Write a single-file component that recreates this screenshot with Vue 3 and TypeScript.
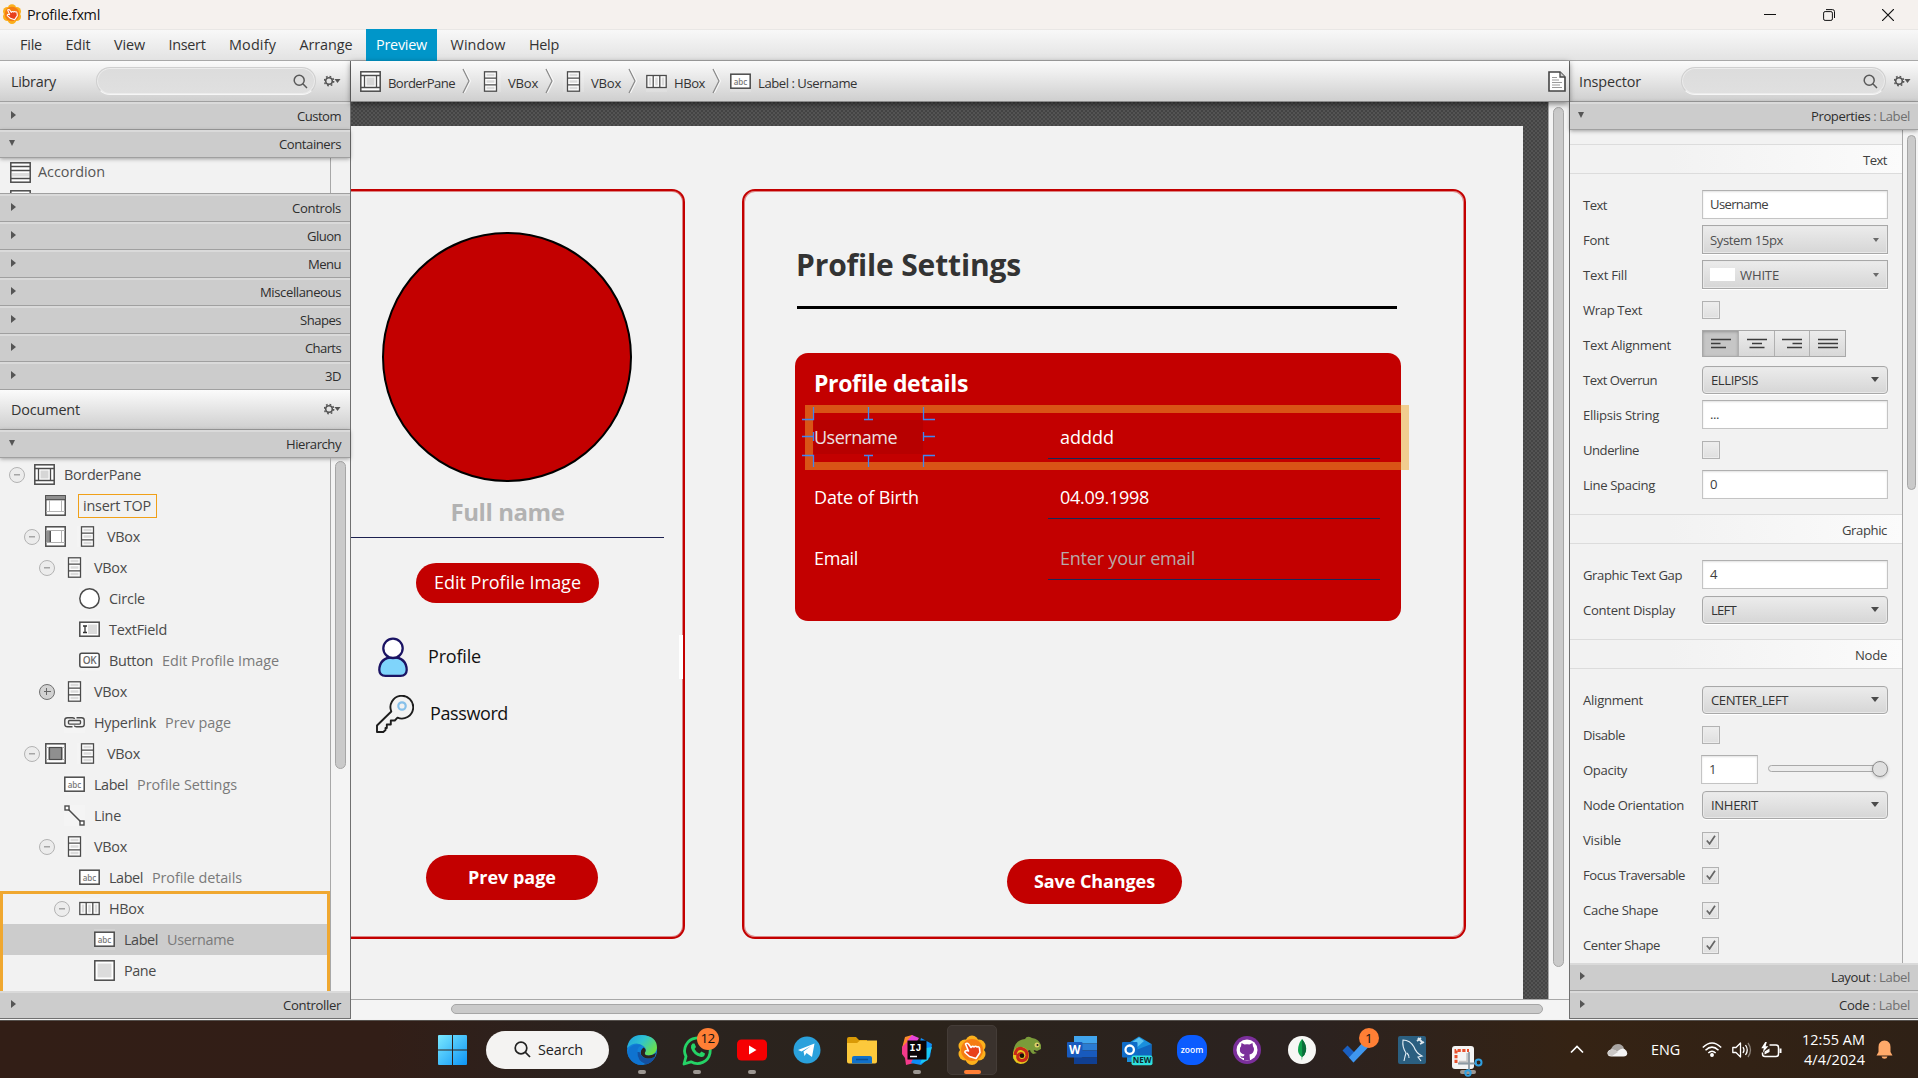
<script setup lang="ts">
import type { Directive } from 'vue'

/* Tightens or loosens tracking so that a label takes the given width. */
const vFit: Directive<HTMLElement, number | undefined> = {
  mounted(el, { value }) {
    const count = (el.textContent ?? '').trim().length
    if (!value || count < 2) return
    const natural = el.getBoundingClientRect().width
    el.style.letterSpacing = `${((value - natural) / count).toFixed(3)}px`
  },
}

const INK = '#4b4b4b'
const frame = `<rect x=".8" y=".8" width="19.4" height="19.4" fill="#fff" stroke="${INK}" stroke-width="1.5"/>`
const abc = `<rect x=".8" y="3.2" width="19.4" height="14" fill="#fff" stroke="${INK}" stroke-width="1.5"/><text x="10.5" y="13.500" font-family="Open Sans, sans-serif" font-size="8" font-weight="600" text-anchor="middle" fill="#7a7a7a">abc</text>`

const icons: Record<string, string> = {
  border: `${frame}<path d="M1 4.5H20M1 16.5H20M4.500 4.500V16.500M16.500 4.500V16.500" stroke="${INK}" stroke-width="1.3"/><rect x="6.500" y="6.500" width="8" height="8" fill="#d6d6d6"/>`,
  top: `${frame}<path d="M1 1H20V4.500H1z" fill="#8f8f8f"/><path d="M1 4.700H20" stroke="${INK}" stroke-width="1.200"/><path d="M1 16.500H20M4.500 5V16.500M16.500 5V16.500" stroke="#b5b5b5"/>`,
  left: `${frame}<path d="M1 4.500H5.300V16.500H1z" fill="#8f8f8f"/><path d="M5.300 4.500V16.500" stroke="${INK}" stroke-width="1.300"/><path d="M1 4.500H20M1 16.500H20M16.500 4.500V16.500" stroke="#b0b0b0"/>`,
  center: `${frame}<path d="M1 4.500H20M1 16.500H20M3.500 4.500V16.500M17.500 4.500V16.500" stroke="#b0b0b0"/><rect x="4.500" y="4.500" width="12" height="12" fill="#8f8f8f" stroke="${INK}" stroke-width="1.200"/>`,
  vbox: `<rect x="4.500" y=".8" width="12" height="19.400" fill="#fff" stroke="${INK}" stroke-width="1.300"/><path d="M4.500 7.200H16.500M4.500 13.800H16.500" stroke="${INK}" stroke-width="1.300"/><path d="M6.500 4H14.500M6.500 10.500H14.500M6.500 17H14.500" stroke="#dcdcdc" stroke-width="2.500"/>`,
  hbox: `<rect x=".8" y="4.500" width="19.400" height="12" fill="#fff" stroke="${INK}" stroke-width="1.300"/><path d="M7.200 4.500V16.500M13.800 4.500V16.500" stroke="${INK}" stroke-width="1.300"/><path d="M4 6.500V14.500M10.500 6.500V14.500M17 6.500V14.500" stroke="#dcdcdc" stroke-width="2.500"/>`,
  circle: `<circle cx="10.500" cy="10.500" r="9.700" fill="#fff" stroke="${INK}" stroke-width="1.500"/>`,
  field: `<rect x=".8" y="3.200" width="19.400" height="14" fill="#fff" stroke="${INK}" stroke-width="1.500"/><path d="M9 5.500H18V15H9z" fill="#dcdcdc"/><path d="M4 7H8M6 7V13.500M4 13.500H8" stroke="#333" stroke-width="1.300"/>`,
  button: `<rect x=".8" y="3.200" width="19.400" height="14" rx="2" fill="#fff" stroke="${INK}" stroke-width="1.500"/><text x="10.500" y="14.200" font-family="Open Sans, sans-serif" font-size="10" font-weight="600" text-anchor="middle" fill="#6a6a6a" letter-spacing="-.5">OK</text>`,
  label: abc,
  link: `<g fill="none" stroke="${INK}" stroke-width="1.400"><path d="M8.500 14.800H3.500Q.8 14.800.8 12.500V8Q.8 5.700 3.500 5.700H8.500Q10.500 5.700 10.500 7M12.500 5.700H17.500Q20.200 5.700 20.200 8V12.500Q20.200 14.800 17.500 14.800H12.500Q10.500 14.800 10.500 13.500"/><rect x="4.500" y="8.500" width="12" height="3.600" rx="1"/></g>`,
  line: `<path d="M3 3L18 18" stroke="${INK}" stroke-width="1.500"/><rect x="1" y="1" width="4" height="4" fill="#fff" stroke="${INK}" stroke-width="1.400"/><rect x="16" y="16" width="4" height="4" fill="#fff" stroke="${INK}" stroke-width="1.400"/>`,
  pane: `${frame}<path d="M3.500 3.500H17.500V17.500H3.500z" fill="#dcdcdc"/>`,
  accordion: `${frame}<path d="M1 4.500H20M1 8.500H20M1 16.500H20" stroke="${INK}" stroke-width="1.300"/><path d="M2 11H19V14.500H2z" fill="#dcdcdc"/>`,
}

const menus = [
  ['File', 22], ['Edit', 25], ['View', 31], ['Insert', 37], ['Modify', 47],
  ['Arrange', 53], ['Preview', 51], ['Window', 55], ['Help', 30],
] as [string, number][]

const libTop = [['Custom', 44, false], ['Containers', 62, true]] as [string, number, boolean][]
const libRest = [
  ['Controls', 49], ['Gluon', 34], ['Menu', 33], ['Miscellaneous', 81],
  ['Shapes', 41], ['Charts', 36], ['3D', 16],
] as [string, number][]

const crumbs = [
  { icon: 'border', text: 'BorderPane', w: 67 },
  { icon: 'vbox', text: 'VBox', w: 30 },
  { icon: 'vbox', text: 'VBox', w: 30 },
  { icon: 'hbox', text: 'HBox', w: 31 },
  { icon: 'label', text: 'Label : Username', w: 99 },
]

interface Node {
  level: number
  icon: string
  text: string
  w: number
  toggle?: '-' | '+'
  slot?: string
  info?: string
  iw?: number
  insert?: boolean
}
const nodes: Node[] = [
  { level: 0, icon: 'border', text: 'BorderPane', w: 77, toggle: '-' },
  { level: 1, icon: '', slot: 'top', text: 'insert TOP', w: 68, insert: true },
  { level: 1, icon: 'vbox', slot: 'left', text: 'VBox', w: 33, toggle: '-' },
  { level: 2, icon: 'vbox', text: 'VBox', w: 33, toggle: '-' },
  { level: 3, icon: 'circle', text: 'Circle', w: 36 },
  { level: 3, icon: 'field', text: 'TextField', w: 58 },
  { level: 3, icon: 'button', text: 'Button', w: 44, info: 'Edit Profile Image', iw: 117 },
  { level: 2, icon: 'vbox', text: 'VBox', w: 33, toggle: '+' },
  { level: 2, icon: 'link', text: 'Hyperlink', w: 62, info: 'Prev page', iw: 66 },
  { level: 1, icon: 'vbox', slot: 'center', text: 'VBox', w: 33, toggle: '-' },
  { level: 2, icon: 'label', text: 'Label', w: 34, info: 'Profile Settings', iw: 100 },
  { level: 2, icon: 'line', text: 'Line', w: 27 },
  { level: 2, icon: 'vbox', text: 'VBox', w: 33, toggle: '-' },
  { level: 3, icon: 'label', text: 'Label', w: 34, info: 'Profile details', iw: 90 },
  { level: 3, icon: 'hbox', text: 'HBox', w: 35, toggle: '-' },
  { level: 4, icon: 'label', text: 'Label', w: 34, info: 'Username', iw: 67 },
  { level: 4, icon: 'pane', text: 'Pane', w: 32 },
]

type Kind = 'text' | 'menu' | 'color' | 'check' | 'align' | 'combo' | 'opacity'
interface Prop { name: string; w: number; kind: Kind; value?: string; vw?: number; on?: boolean }
const sections: { title: string; w: number; rows: Prop[] }[] = [
  {
    title: 'Text', w: 24,
    rows: [
      { name: 'Text', w: 24, kind: 'text', value: 'Username', vw: 58 },
      { name: 'Font', w: 26, kind: 'menu', value: 'System 15px', vw: 73 },
      { name: 'Text Fill', w: 44, kind: 'color', value: 'WHITE', vw: 39 },
      { name: 'Wrap Text', w: 59, kind: 'check' },
      { name: 'Text Alignment', w: 88, kind: 'align' },
      { name: 'Text Overrun', w: 74, kind: 'combo', value: 'ELLIPSIS', vw: 47 },
      { name: 'Ellipsis String', w: 76, kind: 'text', value: '...', vw: 9 },
      { name: 'Underline', w: 56, kind: 'check' },
      { name: 'Line Spacing', w: 72, kind: 'text', value: '0' },
    ],
  },
  {
    title: 'Graphic', w: 45,
    rows: [
      { name: 'Graphic Text Gap', w: 99, kind: 'text', value: '4' },
      { name: 'Content Display', w: 92, kind: 'combo', value: 'LEFT', vw: 25 },
    ],
  },
  {
    title: 'Node', w: 32,
    rows: [
      { name: 'Alignment', w: 60, kind: 'combo', value: 'CENTER_LEFT', vw: 77 },
      { name: 'Disable', w: 42, kind: 'check' },
      { name: 'Opacity', w: 44, kind: 'opacity', value: '1' },
      { name: 'Node Orientation', w: 101, kind: 'combo', value: 'INHERIT', vw: 47 },
      { name: 'Visible', w: 38, kind: 'check', on: true },
      { name: 'Focus Traversable', w: 102, kind: 'check', on: true },
      { name: 'Cache Shape', w: 75, kind: 'check', on: true },
      { name: 'Center Shape', w: 77, kind: 'check', on: true },
    ],
  },
]

const alignPaths = [
  'M0 1.500H20M0 5.500H9.500M0 9.500H15',
  'M0 1.500H20M5 5.500H15M2.500 9.500H17.500',
  'M0 1.500H20M10.500 5.500H20M5 9.500H20',
  'M0 1.500H20M0 5.500H20M0 9.500H20',
]

const fields = [
  { label: 'Username', w: 83, value: 'adddd', vw: 54, dim: true },
  { label: 'Date of Birth', w: 105, value: '04.09.1998', vw: 89 },
  { label: 'Email', w: 44, value: 'Enter your email', vw: 135, hint: true },
]

const flower = `<g fill="#fbb01c"><circle cx="15" cy="7" r="6.500"/><circle cx="22" cy="11" r="6.500"/><circle cx="22" cy="19" r="6.500"/><circle cx="15" cy="23.500" r="6.500"/><circle cx="8" cy="19" r="6.500"/><circle cx="8" cy="11" r="6.500"/></g><circle cx="15" cy="15" r="11" fill="#f57c14"/><path d="M8.500 9Q10 7.500 11.500 9L14 12.500Q15.500 10.500 17 12Q18.500 10.500 20 12Q22 11 22.500 13.500L23 17.500L19 23.500L12.500 21.500L8 17.500Q7.500 15.500 10 15.500L11.500 16z" fill="#e8401c" stroke="#fff" stroke-width="1.600" stroke-linejoin="round"/>`

interface App { name: string; art: string; mark?: 'dot' | 'active' | 'wide'; badge?: string }
const apps: App[] = [
  { name: 'edge', mark: 'dot', art: `<defs><linearGradient id="eg" x1="0" y1="0" x2="1" y2=".6"><stop offset="0" stop-color="#1b9de2"/><stop offset=".5" stop-color="#2fc3cf"/><stop offset="1" stop-color="#6be04a"/></linearGradient></defs><circle cx="15" cy="15" r="15" fill="#1181d8"/><path d="M0 13Q2 0 15 0Q30 1 30 13Q29 20 22 20.500Q17 20.500 18 17.500Q20 14 17 11.500Q9 5 0 13z" fill="url(#eg)"/><path d="M10.500 17Q10 11 15.500 10.500Q8 7.500 3 12.500Q-1 17 2 22.500Q7 31 17 30Q10.500 25 10.500 17z" fill="#0f73d0"/><path d="M10.500 17Q10 26 19 29.500Q25 28 28 22Q16 27 12.500 17z" fill="#1450a0"/><path d="M18 17.500Q17 20.800 22 20.500Q26 20 29 18Q28 21 27.500 22Q18 26 14 19.500Q13 15 16.500 12.500Q20 14.500 18 17.500z" fill="#2b211d"/>` },
  { name: 'whatsapp', mark: 'dot', badge: '12', art: `<path d="M2 29L4 21.500A12.800 12.800 0 1 1 9 26.800z" fill="none" stroke="#25d366" stroke-width="2.800" stroke-linejoin="round"/><path d="M10.500 8.500L12.500 8.500L14 12L12.500 14Q14 17 17.500 18.500L19.500 16.500L23 18.500Q22.500 22.500 19 22Q11 20 9 13Q8.500 10 10.500 8.500z" fill="#25d366"/>` },
  { name: 'youtube', mark: 'dot', art: `<rect x="0" y="4.500" width="30" height="21" rx="4.500" fill="#f60002"/><path d="M12 10.500L19.500 15L12 19.500z" fill="#fff"/>` },
  { name: 'telegram', art: `<circle cx="15" cy="15" r="13.500" fill="#2aa1dc"/><path d="M6 15L22.500 8.500L20 22L14.500 18L12.500 21L11.500 16.500L19 11L9.500 16.500z" fill="#fff"/>` },
  { name: 'files', art: `<path d="M0 4Q0 2 2 2H9L12 5H20V10H0z" fill="#d99a06"/><path d="M0 8H10L13 5.500H30V26.500Q30 28.500 28 28.500H2Q0 28.500 0 26.500z" fill="#fcc93c"/><path d="M5 28.500V23Q5 21 7 21H23Q25 21 25 23V28.500z" fill="#1171c9"/><path d="M9 24.500H21" stroke="#0a4f94" stroke-width="1.500"/>` },
  { name: 'intellij', mark: 'dot', art: `<path d="M3 2L10 0L15 5L9 12L0 13z" fill="#fc8a2c"/><path d="M0 12L8 4L16 14L12 28L4 30L3 23L0 19z" fill="#f43a8b"/><path d="M10 0L17 3L14 8L5 6z" fill="#e844d8"/><path d="M19 3L30 9L28 22L19 30L9 28L16 14z" fill="#0e8df7"/><path d="M24 13L30 12L26 25L18 29z" fill="#19c8f5"/><rect x="5.500" y="5.500" width="19" height="19" fill="#0a0408"/><text x="7.500" y="15.500" font-family="Liberation Mono, monospace" font-weight="700" font-size="10" fill="#fff">IJ</text><path d="M8 21.500H15" stroke="#fff" stroke-width="1.500"/>` },
  { name: 'scenebuilder', mark: 'active', art: flower },
  { name: 'chameleon', art: `<path d="M1 24Q0 5 13 4Q15 0 20 3Q27 4 29 10L29 14L25 16L22 15Q21 17 25 18L21 19Q18 17 18 15L15 16z" fill="#7a9b3a"/><path d="M1 21Q1 12 8 12Q17 12 17 21Q16 29 8.500 29Q2 28 1 21z" fill="#e6c81e"/><path d="M3 20Q4 12.500 9.500 13.500Q15.500 15 15 21Q14 26 9 25.500Q5 24.500 6 20.500Q8 17.500 11 19.500" fill="none" stroke="#c8281a" stroke-width="3.200"/><circle cx="10" cy="20.800" r="2.300" fill="#1a1008"/><circle cx="25" cy="10" r="2.500" fill="#e0d06a"/><circle cx="25.500" cy="10" r="1" fill="#222"/>` },
  { name: 'word', art: `<path d="M7 1H30V8.500H7z" fill="#41a5ee"/><path d="M7 8.500H30V15.500H7z" fill="#2b7cd3"/><path d="M7 15.500H30V22.500H7z" fill="#185abd"/><path d="M7 22.500H30V29H7z" fill="#103f91"/><rect x="0" y="7" width="15.500" height="15.500" rx="1" fill="#185abd"/><text x="7.700" y="19" font-family="Open Sans, sans-serif" font-size="12" font-weight="700" text-anchor="middle" fill="#fff">W</text>` },
  { name: 'outlook', art: `<path d="M5 9L17 1.500L29.500 9V27H5z" fill="#1a8fdc"/><path d="M9 8L17 2.500L22 6L12 15z" fill="#59c3f2"/><path d="M14 15L29.500 9V27H9z" fill="#1066c0"/><rect x="0" y="7" width="15.500" height="15.500" rx="1" fill="#0f6cc8"/><circle cx="7.700" cy="14.700" r="4.200" fill="none" stroke="#fff" stroke-width="2.300"/><rect x="9.500" y="20.500" width="21" height="9.800" rx="2" fill="#2fe0dc"/><text x="20" y="28.300" font-family="Open Sans, sans-serif" font-size="8" font-weight="700" text-anchor="middle" fill="#10272c">NEW</text>` },
  { name: 'zoom', art: `<rect x="0" y="0" width="30" height="30" rx="12.500" fill="#0b5cff"/><text x="15" y="17.500" font-family="Open Sans, sans-serif" font-size="8.500" font-weight="600" text-anchor="middle" fill="#fff">zoom</text>` },
  { name: 'github', art: `<circle cx="15" cy="15" r="14" fill="#7b2f9b"/><circle cx="15" cy="15" r="10.500" fill="#fff"/><path d="M9.500 8L12.500 9.500Q15 9 17.500 9.500L20.500 8L21 11.500Q23 14 21 17.500Q20 19 17.500 19.500L18 25.200H12V23Q9 23.500 8 20.500Q10.500 22 12 21L12.500 19.500Q7 18.500 8 13.500Q8 12 9 11.500z" fill="#7b2f9b"/>` },
  { name: 'mongo', art: `<circle cx="15" cy="15" r="14" fill="#f7f7f5"/><path d="M15 4Q20 10 19 16Q18 20 15.300 22L15 25.500Q14.500 24 14.700 22Q11 19 11 15Q11 9 15 4z" fill="#10a04c"/><path d="M15 4Q20 10 19 16Q18 20 15.300 22z" fill="#0b6b3a"/>` },
  { name: 'todo', badge: '1', art: `<path d="M.5 15.500L5.500 10.500L16 21L11.500 27.500z" fill="#1a5fc0"/><path d="M11.500 27.500L7 22.500L22 6L27.500 11z" fill="#3f97ee"/>` },
  { name: 'mysql', art: `<rect x="1" y="1" width="28" height="28" rx="2" fill="#2b5f80"/><path d="M7 26Q8 21 9 18Q5 12 6 5Q13 5 17 12Q19 18 25 21L21 22L24 26M10 18Q12 20 12 23" fill="none" stroke="#e4eef4" stroke-width="1.100"/><path d="M21 3L26 8M20 6L24 3M23 9L27 7" stroke="#dfe8ee" stroke-width="1.800"/>` },
  { name: 'snip', mark: 'wide', art: `<rect x="0" y="11" width="22" height="23" rx="3" fill="#f4f4f4"/><path d="M4 28V15.500H17" fill="none" stroke="#e8502c" stroke-width="3" stroke-dasharray="3.200 1.500"/><path d="M7 27.500H16V18" fill="none" stroke="#c6c6c6" stroke-width="3.500"/><path d="M17 17V36M6 28.500H25" stroke="#8d9aa3" stroke-width="1.800"/><circle cx="26.500" cy="27.500" r="3" fill="none" stroke="#2f9fe0" stroke-width="2"/><circle cx="16" cy="38" r="2.700" fill="none" stroke="#2f9fe0" stroke-width="2"/>` },
]
</script>

<template>
  <div class="desktop">
    <header class="titlebar">
      <svg class="logo" viewBox="0 0 30 30" v-html="flower"></svg>
      <span v-fit="73">Profile.fxml</span>
      <div class="winctl">
        <svg width="12" height="12" viewBox="0 0 12 12"><path d="M0 5.500H12" stroke="#111" /></svg>
        <svg width="12" height="12" viewBox="0 0 12 12" fill="none" stroke="#111"><rect x=".6" y="2.600" width="8.800" height="8.800" rx="1.500" /><path d="M3 .6H9.500Q11.500.6 11.500 2.600V9" /></svg>
        <svg width="12" height="12" viewBox="0 0 12 12"><path d="M0 0L12 12M12 0L0 12" stroke="#111" stroke-width="1.200" /></svg>
      </div>
    </header>

    <nav class="menubar">
      <div v-for="m in menus" :key="m[0]" class="menu" :class="{ open: m[0] === 'Preview' }">
        <span v-fit="m[1]">{{ m[0] }}</span>
      </div>
    </nav>

    <main class="work">
      <aside class="side">
        <div class="head">
          <span v-fit="45" class="head-name">Library</span>
          <div class="search lib-search">
            <svg width="15" height="15" viewBox="0 0 15 15" fill="none" stroke="#595959" stroke-width="1.500"><circle cx="6.200" cy="6.200" r="5" /><path d="M9.800 9.800L14 14" /></svg>
          </div>
          <svg class="gear" width="17" height="12" viewBox="0 0 17 12"><circle cx="5" cy="6" r="3.300" fill="none" stroke="#555" stroke-width="1.600" /><circle cx="5" cy="6" r="4.700" fill="none" stroke="#555" stroke-width="1.400" stroke-dasharray="1.700 1.990" /><path d="M10.500 4H16.500L13.500 8z" fill="#555" /></svg>
        </div>
        <div v-for="t in libTop" :key="t[0]" class="title" :class="{ opened: t[2] }">
          <i class="arrow"></i><span v-fit="t[1]">{{ t[0] }}</span>
        </div>
        <div class="lib-list">
          <div class="lib-items">
            <div class="lib-row"><svg class="ic" viewBox="0 0 21 21" v-html="icons.accordion"></svg><span v-fit="67">Accordion</span></div>
            <div class="lib-row"><svg class="ic" viewBox="0 0 21 21" v-html="icons.accordion"></svg></div>
          </div>
        </div>
        <div v-for="t in libRest" :key="t[0]" class="title">
          <i class="arrow"></i><span v-fit="t[1]">{{ t[0] }}</span>
        </div>
        <div class="head doc">
          <span v-fit="69" class="head-name">Document</span>
          <svg class="gear" width="17" height="12" viewBox="0 0 17 12"><circle cx="5" cy="6" r="3.300" fill="none" stroke="#555" stroke-width="1.600" /><circle cx="5" cy="6" r="4.700" fill="none" stroke="#555" stroke-width="1.400" stroke-dasharray="1.700 1.990" /><path d="M10.500 4H16.500L13.500 8z" fill="#555" /></svg>
        </div>
        <div class="title opened"><i class="arrow"></i><span v-fit="55">Hierarchy</span></div>
        <div class="tree-wrap">
          <div class="tree">
            <div
              v-for="(n, i) in nodes"
              :key="i"
              class="node"
              :class="[`lv${n.level}`, { slotted: n.slot, selected: i === 15 }]"
            >
              <span class="toggle" :class="{ none: !n.toggle, plus: n.toggle === '+' }"></span>
              <svg v-if="n.slot" class="ic slot-ic" viewBox="0 0 21 21" v-html="icons[n.slot]"></svg>
              <svg v-if="n.icon" class="ic" :class="{ after: n.slot }" viewBox="0 0 21 21" v-html="icons[n.icon]"></svg>
              <span v-if="n.insert" class="insert"><span v-fit="n.w">{{ n.text }}</span></span>
              <span v-else v-fit="n.w" class="name">{{ n.text }}</span>
              <span v-if="n.info" v-fit="n.iw" class="info">{{ n.info }}</span>
            </div>
            <div class="parent-ring"></div>
          </div>
          <div class="vtrack"><div class="tree-thumb"></div></div>
        </div>
        <div class="title last"><i class="arrow"></i><span v-fit="58">Controller</span></div>
      </aside>

      <section class="center">
        <div class="crumbs">
          <template v-for="(c, i) in crumbs" :key="i">
            <svg v-if="i" class="sep" width="9" height="26" viewBox="0 0 9 26"><path d="M1 1L7 13L1 25" fill="none" stroke="#8c8c8c" stroke-width="1.300" /><path d="M2.500 1L8.500 13L2.500 25" fill="none" stroke="#fafafa" /></svg>
            <svg class="ic" viewBox="0 0 21 21" v-html="icons[c.icon]"></svg>
            <span v-fit="c.w" class="crumb">{{ c.text }}</span>
          </template>
          <svg class="doc-ic" width="18" height="21" viewBox="0 0 18 21"><path d="M1 1H12L17 6V20H1z" fill="#fff" stroke="#444" stroke-width="1.600" /><path d="M12 1V6H17" fill="#ccc" stroke="#444" stroke-width="1.300" /><path d="M4 6.500H9M4 9H11M4 11.500H14M4 14H12M4 16.500H14" stroke="#999" /></svg>
        </div>
        <div class="stage">
          <div class="view">
            <div class="page">
              <div class="card account">
                <div class="col">
                  <div class="avatar"></div>
                  <div class="fullname"><span v-fit="114">Full name</span></div>
                  <div class="edit"><span v-fit="147">Edit Profile Image</span></div>
                  <div class="link-row first">
                    <svg width="30" height="40" viewBox="0 0 30 40" stroke="#1b1464" stroke-width="2.300"><path d="M15 20Q1.500 21 1.300 33Q1.500 38.800 7.500 38.800H22.500Q28.500 38.800 28.700 33Q28.500 21 15 20z" fill="#7fd4fb" /><circle cx="15" cy="11.300" r="9.700" fill="#fff" /></svg>
                    <span v-fit="53">Profile</span>
                  </div>
                  <div class="link-row second">
                    <svg width="38" height="38" viewBox="0 0 38 38" fill="none" stroke="#1d1d1d" stroke-width="1.900" stroke-linejoin="round"><path d="M15.300 16.500A11.400 11.400 0 1 1 21.500 22.700L18.800 25.500H14.800V29.500H10.800V33H9.500V35L7.300 37H1V30.500z" /><circle cx="26" cy="11" r="3.700" stroke="#86c0ea" stroke-width="2.200" /></svg>
                    <span v-fit="78">Password</span>
                  </div>
                  <div class="pill prev"><span v-fit="88">Prev page</span></div>
                </div>
                <div class="strip"></div>
              </div>

              <div class="card settings">
                <h1><span v-fit="225">Profile Settings</span></h1>
                <div class="rule"></div>
                <div class="details">
                  <h2><span v-fit="154">Profile details</span></h2>
                  <div v-for="f in fields" :key="f.label" class="field">
                    <div class="flabel"><span v-fit="f.w" :class="{ dim: f.dim }">{{ f.label }}</span></div>
                    <div class="fvalue" :class="{ hint: f.hint }"><span v-fit="f.vw">{{ f.value }}</span></div>
                  </div>
                  <div class="ring"></div>
                  <div class="shade"></div>
                  <svg class="handles" width="135" height="61" viewBox="0 0 135 61" fill="none" stroke="#3f86f2" stroke-width="1.300">
                    <path d="M0 12.500H11.500V0M0 48.500H11.500V60M0 29.500H11.500M11.500 25V34M66.500 0V12.500M62 12.500H71M66.500 60V48.500M62 48.500H71M121.500 0V12.500H133M121.500 60V48.500H133M121.500 29.500H133M121.500 25V34" />
                  </svg>
                </div>
                <div class="pill save"><span v-fit="121">Save Changes</span></div>
              </div>
            </div>
          </div>
          <div class="stage-track"><div class="stage-thumb"></div></div>
        </div>
        <div class="hbar"><div class="hthumb"></div></div>
      </section>

      <aside class="inspector">
        <div class="head">
          <span v-fit="62" class="head-name">Inspector</span>
          <div class="search ins-search">
            <svg width="15" height="15" viewBox="0 0 15 15" fill="none" stroke="#595959" stroke-width="1.500"><circle cx="6.200" cy="6.200" r="5" /><path d="M9.800 9.800L14 14" /></svg>
          </div>
          <svg class="gear" width="17" height="12" viewBox="0 0 17 12"><circle cx="5" cy="6" r="3.300" fill="none" stroke="#555" stroke-width="1.600" /><circle cx="5" cy="6" r="4.700" fill="none" stroke="#555" stroke-width="1.400" stroke-dasharray="1.700 1.990" /><path d="M10.500 4H16.500L13.500 8z" fill="#555" /></svg>
        </div>
        <div class="title opened"><i class="arrow"></i><span v-fit="99">Properties <em>: Label</em></span></div>
        <div class="props-wrap">
          <div class="props">
            <template v-for="s in sections" :key="s.title">
              <div class="section"><span v-fit="s.w">{{ s.title }}</span></div>
              <div class="rows">
                <div v-for="r in s.rows" :key="r.name" class="prop">
                  <div class="pname"><span v-fit="r.w">{{ r.name }}</span></div>
                  <div v-if="r.kind === 'text'" class="input"><span v-fit="r.vw">{{ r.value }}</span></div>
                  <div v-else-if="r.kind === 'menu' || r.kind === 'color'" class="drop square">
                    <i v-if="r.kind === 'color'" class="swatch"></i><span v-fit="r.vw">{{ r.value }}</span><i class="caret small"></i>
                  </div>
                  <div v-else-if="r.kind === 'combo'" class="drop"><span v-fit="r.vw">{{ r.value }}</span><i class="caret"></i></div>
                  <div v-else-if="r.kind === 'check'" class="check" :class="{ on: r.on }">
                    <svg v-if="r.on" width="10" height="10" viewBox="0 0 10 10"><path d="M.8 5.500L3.600 8.800L9 .8" fill="none" stroke="#666" stroke-width="1.700" /></svg>
                  </div>
                  <div v-else-if="r.kind === 'align'" class="aligns">
                    <div v-for="(p, i) in alignPaths" :key="i" :class="{ sel: i === 0 }"><svg width="20" height="11" viewBox="0 0 20 11"><path :d="p" stroke="#3c3c3c" stroke-width="1.400" /></svg></div>
                  </div>
                  <div v-else class="opacity">
                    <div class="input short"><span>{{ r.value }}</span></div>
                    <div class="slider"><i class="knob"></i></div>
                  </div>
                </div>
              </div>
            </template>
          </div>
          <div class="vtrack ins"><div class="ins-thumb"></div></div>
        </div>
        <div class="title"><i class="arrow"></i><span v-fit="79">Layout <em>: Label</em></span></div>
        <div class="title last"><i class="arrow"></i><span v-fit="71">Code <em>: Label</em></span></div>
      </aside>
    </main>

    <footer class="taskbar">
      <svg class="start" width="29" height="30" viewBox="0 0 29 30">
        <defs><linearGradient id="wg" x1="0" y1="0" x2="1" y2="1"><stop offset="0" stop-color="#7be9ff" /><stop offset="1" stop-color="#0d94f5" /></linearGradient></defs>
        <path d="M0 1Q0 0 1 0H14V14.500H0zM15 0H28Q29 0 29 1V14.500H15zM0 15.500H14V30H1Q0 30 0 29zM15 15.500H29V29Q29 30 28 30H15z" fill="url(#wg)" />
      </svg>
      <div class="tsearch">
        <svg width="17" height="17" viewBox="0 0 17 17" fill="none" stroke="#222" stroke-width="1.700"><circle cx="7" cy="7" r="5.800" /><path d="M11.200 11.200L16 16" /></svg>
        <span v-fit="45">Search</span>
      </div>
      <div class="apps">
        <div v-for="a in apps" :key="a.name" class="app" :class="a.mark">
          <svg width="30" height="30" viewBox="0 0 30 30" overflow="visible" v-html="a.art"></svg>
          <span v-if="a.badge" class="badge" :class="{ one: a.badge === '1' }">{{ a.badge }}</span>
        </div>
      </div>
      <div class="tray">
        <svg class="chev" width="14" height="9" viewBox="0 0 14 9"><path d="M1 7.500L7 1.500L13 7.500" fill="none" stroke="#fff" stroke-width="1.700" /></svg>
        <svg class="cloud" width="21" height="14" viewBox="0 0 21 14"><path d="M3 9Q5 1 11 1Q15.500 1 17 5.500L12 9z" fill="#a9a5a2" /><path d="M4.500 13.500Q.5 13.500.5 10Q.8 6.500 5 6.500Q8 6.500 10 8.500Q15 4.500 17.500 6Q20.500 8 20.300 10.500Q20 13.500 16.500 13.500z" fill="#f3f3f3" /><path d="M3.500 6.800Q8 5.500 11 9L5 13Q0 12.500.5 9.500z" fill="#cbc8c6" /></svg>
        <span v-fit="29" class="lang">ENG</span>
        <svg class="wifi" width="20" height="15" viewBox="0 0 20 15" fill="none" stroke="#fff" stroke-width="1.500"><path d="M.8 5.500Q10-3.500 19.200 5.500M3.500 8.300Q10 2 16.500 8.300M6.300 11Q10 7.500 13.700 11" /><circle cx="10" cy="13" r="1.200" fill="#fff" /></svg>
        <svg class="vol" width="20" height="16" viewBox="0 0 20 16" fill="none" stroke="#fff" stroke-width="1.300"><path d="M.8 5.500H4L8.500 1V15L4 10.500H.8z" stroke-linejoin="round" /><path d="M11 5Q13 8 11 11M13.500 3Q17 8 13.500 13" /><path d="M16 1Q21 8 16 15" stroke="#8a8078" /></svg>
        <svg class="bat" width="21" height="16" viewBox="0 0 21 16"><path d="M8.500 3H15Q17.500 3 17.500 5.500V12Q17.500 14.500 15 14.500H4Q1.500 14.500 1.500 12V10.500" fill="none" stroke="#fff" stroke-width="1.500" /><path d="M18.500 6.500H20.500V11H18.500z" fill="#fff" /><path d="M3.500 12.500V9.500L8.500 6.500V10z" fill="#fff" /><path d="M4.200 0L.3 6.200H2.800L1.800 10.500L7.300 4.200H4.600L5.800 0z" fill="#fff" /></svg>
        <div class="clock"><div><span v-fit="63">12:55 AM</span></div><div><span v-fit="61">4/4/2024</span></div></div>
        <svg class="bell" width="17" height="19" viewBox="0 0 17 19"><path d="M8.500.5Q14.500 1 14.500 7V12L16.500 15.500H.5L2.500 12V7Q2.500 1 8.500.5zM5.500 16.500H11.500Q11 18.700 8.500 18.700Q6 18.700 5.500 16.500z" fill="#ffaa6a" /></svg>
      </div>
    </footer>
  </div>
</template>

<style>
html,
body {
  margin: 0;
  overflow: hidden;
}
</style>

<style scoped>
.desktop {
  width: 1918px;
  height: 1078px;
  display: flex;
  flex-direction: column;
  background: #f2f2f2;
  font-family: 'Open Sans', 'Noto Sans', sans-serif;
  font-size: 14.4px;
  color: #333;
  overflow: hidden;
}
.desktop * { box-sizing: border-box; }
.desktop span { white-space: nowrap; }
svg { display: block; flex: none; }
em { font-style: normal; color: #707070; }

.titlebar {
  height: 29px;
  flex: none;
  display: flex;
  align-items: center;
  background: #f5f1ee;
  padding-left: 2px;
  color: #111;
}
.logo { width: 20px; height: 20px; margin: -1px 5px 0 0; }
.winctl { margin-left: auto; margin-right: 24px; display: flex; gap: 47px; }
.menubar {
  height: 32px;
  flex: none;
  display: flex;
  padding-left: 8.250px;
  border-top: 1px solid #e9e7e5;
  border-bottom: 1px solid #a8a8a8;
  background: linear-gradient(#f8f8f8, #e3e3e3);
}
.menu { margin: 0 1.750px; padding: 0 10px; line-height: 30px; }
.menu.open { background: #0096c9; color: #fff; margin-top: -1px; margin-bottom: -1px; padding-top: 1px; }

.work { height: 958px; flex: none; display: flex; }
.side { width: 351px; flex: none; border-right: 1px solid #707070; display: flex; flex-direction: column; }
.head {
  height: 41px;
  flex: none;
  display: flex;
  align-items: center;
  background: linear-gradient(#fbfbfb, #cfcfcf);
  border-bottom: 1px solid #a0a0a0;
  padding-left: 11px;
}
.head.doc { height: 40px; }
.head-name { padding-top: 1px; }
.doc .head-name { padding-top: 0; margin-top: -1px; }
.doc .gear { margin-top: -1px; }
.search {
  height: 28px;
  border-radius: 14px;
  border: 1px solid #cfcfcf;
  border-bottom-color: #f6f6f6;
  box-shadow: inset 0 0 0 1px #ececec;
  background: linear-gradient(#dcdcdc, #e0e0e0);
  display: flex;
  align-items: center;
  justify-content: flex-end;
  padding-right: 7px;
}
.lib-search { width: 220px; margin-left: 40px; }
.gear { margin-left: auto; margin-right: 9px; }
.title {
  height: 28px;
  flex: none;
  display: flex;
  align-items: center;
  justify-content: space-between;
  font-size: 13.100px;
  background: #cccccc;
  border-top: 2px solid #dadada;
  border-bottom: 1px solid #a0a0a0;
  padding: 0 9px 0 11px;
  color: #2e2e2e;
}
.title span { margin-top: -2px; }
.title.last { border-bottom-color: #707070; }
.title.opened { padding-left: 9px; position: relative; box-shadow: 0 1px 4px rgba(0, 0, 0, 0.35); }
.arrow { border-left: 5px solid #555; border-top: 4px solid transparent; border-bottom: 4px solid transparent; margin-top: -4px; }
.opened .arrow { border-top: 6px solid #555; border-left: 3.500px solid transparent; border-right: 3.500px solid transparent; border-bottom: 0; margin-top: -3px; }
.lib-list { height: 36px; flex: none; overflow: hidden; border-bottom: 1px solid #a0a0a0; display: flex; }
.lib-items { width: 331px; height: 36px; border-right: 1px solid #a8a8a8; padding-left: 9px; color: #555; overflow: hidden; }
.lib-row { height: 28px; display: flex; align-items: center; gap: 7px; padding-left: 1px; }
.lib-row span { margin-top: -2px; }
.ic { width: 21px; height: 21px; background: rgba(255, 255, 255, 0.15); }

.tree-wrap { flex: 1; min-height: 0; display: flex; overflow: hidden; }
.tree { width: 331px; flex: none; border-right: 1px solid #a8a8a8; overflow: hidden; position: relative; padding-top: 1px; }
.node { height: 31px; display: flex; align-items: center; color: #4a4a4a; padding-left: 9px; }
.lv1 { padding-left: 24px; }
.lv2 { padding-left: 39px; }
.lv3 { padding-left: 54px; }
.lv4 { padding-left: 69px; }
.selected { background: #cccccc; }
.toggle {
  width: 16px;
  height: 16px;
  flex: none;
  border-radius: 50%;
  border: 1px solid #b3b3b3;
  margin-right: 9px;
  background: linear-gradient(#a5a5a5, #a5a5a5) center / 6px 1.500px no-repeat #ececec;
}
.toggle.plus {
  border-color: #707070;
  background: linear-gradient(#666, #666) center / 7px 1.300px no-repeat, linear-gradient(#666, #666) center / 1.300px 7px no-repeat, #d2d2d2;
}
.toggle.none { visibility: hidden; }
.slotted .toggle { margin-right: 5px; }
.after { margin-left: 11px; }
.name { margin-left: 9px; }
.insert { margin-left: 12px; border: 1px solid #f0a018; height: 24px; line-height: 21px; padding: 0 5px 0 4px; }
.info { margin-left: 9px; color: #7a7a7a; }
.parent-ring { position: absolute; left: 0; top: 433px; width: 330px; height: 200px; border: 3px solid #f0a830; }
.vtrack { flex: 1; background: #f4f4f4; padding: 3px 0 0 4px; }
.tree-thumb { width: 11px; height: 308px; border-radius: 6px; background: #cacaca; border: 1px solid #a6a6a6; }

.center { width: 1218px; flex: none; display: flex; flex-direction: column; }
.crumbs {
  height: 41px;
  flex: none;
  display: flex;
  align-items: center;
  background: linear-gradient(#fbfbfb, #cfcfcf);
  border-bottom: 1px solid #8a8a8a;
  padding-left: 9px;
  position: relative;
  box-shadow: 0 2px 6px rgba(0, 0, 0, 0.5);
  font-size: 13.100px;
}
.crumb { margin: 3px 0 0 7px; }
.sep { margin: 0 9px 0 7px; }
.doc-ic { margin-left: auto; margin-right: 3px; }
.stage { height: 897px; flex: none; display: flex; }
.view {
  width: 1197px;
  height: 897px;
  padding: 24px 25px 0 0;
  overflow: hidden;
  background: repeating-conic-gradient(#444 0 25%, #545454 0 50%) 0 0 / 4px 4px;
}
.page { height: 873px; background: #f2f2f2; display: flex; padding-top: 63px; }
.card { height: 750px; border: 2px solid #c30000; border-radius: 13px; box-shadow: inset 0 0 0 1px rgba(195, 0, 0, 0.45); }
.account { width: 334px; border-left: 0; border-top-left-radius: 0; border-bottom-left-radius: 0; position: relative; box-shadow: inset -1px 0 0 rgba(195, 0, 0, 0.45), inset 0 1px 0 rgba(195, 0, 0, 0.45), inset 0 -1px 0 rgba(195, 0, 0, 0.45); }
.col { width: 313px; display: flex; flex-direction: column; align-items: center; padding-top: 41px; font-size: 18px; color: #111; }
.avatar { width: 250px; height: 250px; border-radius: 50%; border: 2.500px solid #000; background: #c30000; flex: none; margin-left: -1px; }
.fullname { width: 313px; height: 56px; flex: none; border-bottom: 1.500px solid #1d2150; text-align: center; font-size: 24px; font-weight: 700; line-height: 60px; color: #b2b2b2; }
.edit { margin-top: 25px; width: 183px; height: 40px; flex: none; border-radius: 20px; background: #c30000; color: #fff; text-align: center; line-height: 38px; }
.link-row { width: 313px; display: flex; align-items: center; flex: none; }
.first { height: 40px; margin-top: 34px; padding-left: 27px; gap: 20px; }
.second { height: 38px; margin-top: 18px; padding-left: 25px; gap: 16px; }
.first span,
.second span { margin-top: -2px; }
.pill { background: #c30000; color: #fff; font-weight: 700; font-size: 18px; text-align: center; border-radius: 23px; height: 45px; line-height: 45px; }
.prev { width: 172px; flex: none; margin: 122px 0 0 9px; }
.strip { position: absolute; right: 0; top: 444px; width: 4px; height: 44px; background: #fff; }

.settings { width: 724px; margin-left: 57px; padding: 0 0 0 51px; }
h1 { margin: 53px 0 0 1px; height: 42px; line-height: 42px; font-size: 30px; font-weight: 700; color: #333; }
h1 span { display: inline-block; margin-top: -8px; }
.rule { margin: 20px 0 0 2px; width: 600px; height: 2.500px; background: #000; }
.details { position: relative; margin-top: 44.500px; width: 606px; height: 268px; border-radius: 13px; background: #c30000; padding: 0 0 0 19px; font-size: 18px; color: #fff; overflow: visible; }
h2 { margin: 0; height: 46px; line-height: 60px; font-size: 23px; font-weight: 700; }
.field { display: flex; height: 60.300px; }
.flabel { width: 234px; line-height: 76px; }
.dim { color: #fbf0f0; }
.fvalue { width: 332px; height: 60px; border-bottom: 1px solid #172a5c; padding-left: 12px; line-height: 76px; }
.hint { color: #b9a9a9; }
.ring { position: absolute; left: 10px; top: 52px; width: 604px; height: 65px; border: 8.500px solid rgba(239, 167, 43, 0.5); }
.shade { position: absolute; left: 19px; top: 67px; width: 109px; height: 34px; background: rgba(0, 0, 0, 0.06); }
.handles { position: absolute; left: 7px; top: 54px; }
.save { width: 175px; margin: 238px 0 0 212px; }

.stage-track { width: 21px; background: #f4f4f4; border-left: 1px solid #a8a8a8; padding: 5px 0 0 4px; }
.stage-thumb { width: 11px; height: 860px; border-radius: 6px; background: #cacaca; border: 1px solid #a6a6a6; }
.hbar { flex: 1; border-top: 1px solid #a8a8a8; background: #f4f4f4; padding: 4px 0 0 100px; }
.hthumb { width: 1092px; height: 10px; border-radius: 5px; background: #cacaca; border: 1px solid #a6a6a6; }

.inspector { width: 349px; flex: none; border-left: 1px solid #707070; display: flex; flex-direction: column; }
.inspector .head { padding-left: 9px; }
.inspector .title { padding-right: 8px; padding-left: 10px; }
.inspector .title.opened { padding-left: 8px; }
.ins-search { width: 205px; margin-left: 40px; }
.inspector .gear { margin-right: 7px; }
.props-wrap { flex: 1; min-height: 0; display: flex; }
.props { width: 333px; border-right: 1px solid #a8a8a8; padding-top: 14px; overflow: hidden; font-size: 13.100px; color: #404040; }
.section {
  height: 30px;
  line-height: 31px;
  text-align: right;
  padding-right: 15px;
  border-top: 1px solid #dcdcdc;
  border-bottom: 1px solid #dcdcdc;
  background: linear-gradient(90deg, #f2f2f2 30%, #fbfbfb);
}
.rows { padding: 13.500px 0 11.500px; }
.prop { height: 35px; display: flex; align-items: center; padding-left: 13px; }
.pname { width: 119px; flex: none; }
.input { width: 186px; height: 29px; line-height: 27px; background: #fff; border: 1px solid #c4c4c4; border-top-color: #b0b0b0; box-shadow: inset 0 1px 2px rgba(0, 0, 0, 0.12); padding-left: 7px; margin-top: -1px; }
.drop {
  width: 186px;
  height: 28px;
  border: 1px solid #a8a8a8;
  border-radius: 4px;
  background: linear-gradient(#ececec, #d6d6d6);
  box-shadow: inset 0 0 0 1px #e8e8e8, 0 1px 0 #fff;
  display: flex;
  align-items: center;
  padding: 0 8px 1px 8px;
  color: #333;
}
.square { height: 29px; border-radius: 0; padding: 0 8px 0 7px; color: #505050; margin-top: -1px; }
.swatch { width: 25px; height: 13px; background: #fff; margin-right: 5px; }
.caret { margin-left: auto; border-top: 5px solid #4a4a4a; border-left: 4.500px solid transparent; border-right: 4.500px solid transparent; }
.caret.small { border-top: 4px solid #6a6a6a; border-left-width: 3.500px; border-right-width: 3.500px; }
.check { width: 18px; height: 18px; border: 1px solid #b2b2b2; background: linear-gradient(#eeeeee, #dfdfdf); box-shadow: inset 0 0 0 1px #ececec; display: flex; align-items: center; justify-content: center; }
.check.on { width: 17px; height: 17px; }
.aligns { display: flex; width: 144px; height: 27px; border: 1px solid #a8a8a8; margin-top: -3px; background: linear-gradient(#ececec, #d8d8d8); }
.aligns div { width: 36px; display: flex; align-items: center; justify-content: center; border-left: 1px solid #b0b0b0; }
.aligns .sel { background: #c6c6c6; border-left: 0; box-shadow: inset 0 1px 3px rgba(0, 0, 0, 0.25); }
.opacity { display: flex; align-items: center; margin-left: -1px; }
.short { width: 57px; }
.slider { position: relative; margin: -3px 0 0 10px; width: 118px; height: 7px; border-radius: 4px; border: 1px solid #a9a9a9; background: #ededed; }
.knob { position: absolute; right: -3px; top: -5px; width: 16px; height: 16px; border-radius: 50%; border: 1px solid #8d8d8d; background: #e0e0e0; box-shadow: 0 1px 3px rgba(0, 0, 0, 0.2); }
.vtrack.ins { padding: 5px 0 0 4px; }
.ins-thumb { width: 9px; height: 355px; border-radius: 5px; background: #cacaca; border: 1px solid #a6a6a6; }

.taskbar {
  flex: 1;
  margin-top: 1px;
  display: flex;
  align-items: center;
  padding-left: 438px;
  border-top: 1px solid #55504c;
  background: linear-gradient(90deg, #321e16 0, #321e17 20%, #2a2320 32%, #2b231b 48%, #2b2220 68%, #352314 82%, #2f2116 100%);
  color: #fff;
}
.tsearch { width: 123px; height: 38px; margin: 0 5.500px 0 19px; border-radius: 19px; background: #f4f3f2; color: #222; display: flex; align-items: center; padding-left: 28px; gap: 7px; }
.apps { display: flex; margin-top: 1px; }
.app { width: 55px; height: 50px; position: relative; display: flex; align-items: center; justify-content: center; }
.app.active { width: 50px; margin: 0 2.500px; border-radius: 5px; background: #3a322d; border: 1px solid #443c37; }
.app::after { position: absolute; left: 50%; bottom: 1px; height: 4px; border-radius: 2px; }
.dot::after { content: ''; width: 8px; margin-left: -4px; background: #9c9792; }
.active::after { content: ''; width: 17px; margin-left: -8.500px; background: #ff7f35; bottom: 0; }
.wide { isolation: isolate; }
.wide::after { content: ''; width: 16px; margin-left: -7px; background: #9c9792; z-index: -1; }
.badge { position: absolute; left: 27px; top: 3px; width: 22px; height: 22px; border-radius: 50%; background: #ff7f35; color: #111; font-size: 13.500px; line-height: 21px; text-align: center; letter-spacing: -0.8px; }
.badge.one { left: 29px; width: 20px; height: 20px; line-height: 20px; }
.tray { display: flex; align-items: center; margin-left: 75.500px; }
.cloud { margin-left: 23px; }
.lang { margin-left: 23px; }
.wifi { margin-left: 22px; }
.vol { margin-left: 10px; }
.bat { margin-left: 9px; }
.clock { width: 67px; margin-left: 16px; text-align: right; line-height: 20px; }
.bell { margin-left: 11px; }
</style>
